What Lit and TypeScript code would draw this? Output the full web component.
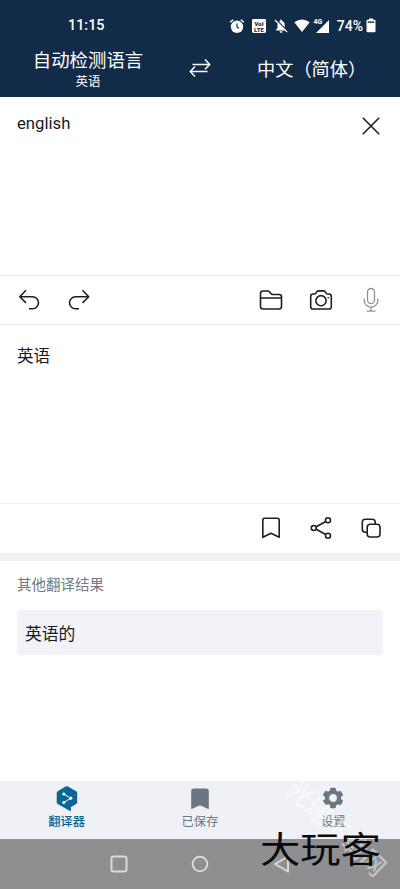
import { LitElement, html, css, svg } from "lit";
import { customElement } from "lit/decorators.js";

const icon = (w: number, h: number, body: unknown, cls = "") =>
  html`<svg class="ic ${cls}" width=${w} height=${h} viewBox="0 0 ${w} ${h}">${body}</svg>`;

const alarm = icon(16, 16, svg`<circle cx="8" cy="8.8" r="6.2" fill="#fff"/><path d="M1.2 4.3 4.2 1.7M14.8 4.3 11.8 1.7" stroke="#fff" stroke-width="1.5"/><path d="M8 5.4V9l2 1.5" stroke="#122b48" stroke-width="1.2" fill="none"/>`);
const volte = icon(14, 14, svg`<rect width="14" height="14" rx="1.4" fill="#fff"/><text x="7" y="6.8" class="vo">VoI</text><text x="7" y="12.8" class="vo">LTE</text>`);
const bell = icon(16, 16, svg`<path d="M3.2 12.500V11.500l1.300-1.200V7c0-2 1.100-3.500 2.700-3.900V2.300a.9.9 0 0 1 1.800 0v.8c1.600.4 2.700 1.900 2.700 3.900v3.300L13 11.500v1zM6.600 13.300h3A1.500 1.500 0 0 1 6.600 13.300z" fill="#fff"/><path d="M3 1.500 15 13.500" stroke="#122b48" stroke-width="1.300"/><path d="M2 2 14.200 14.200" stroke="#fff" stroke-width="1.200"/>`);
const wifi = icon(16, 14, svg`<path d="M.3 3.200Q8-2.400 15.700 3.200L8 13z" fill="#fff"/>`);
const signal = icon(16, 16, svg`<path d="M15 2v13H2z" fill="#fff"/><path d="M0 0h8.400v6.600H0z" fill="#122b48"/><text x="-.5" y="5.800" class="g4">4G</text>`);
const battery = icon(10, 15, svg`<path d="M3 .500h4v1.300h1.500q1 0 1 1v10.200q0 1.200-1 1.200h-7q-1 0-1-1.200V2.800q0-1 1-1H3z" fill="#fff"/><path d="M1.700 4.100h6.600" stroke="#122b48" stroke-width="1.400"/>`);
const swap = icon(22, 22, svg`<path d="M3.500 7.400H20.500M16 2.500l4.700 4.900L16 12.300M18.500 14.500H1.500M6 9.600l-4.700 4.900L6 19.400" class="lw"/>`);
const close = icon(20, 20, svg`<path d="m1.800 1.800 16.400 16.400M18.200 1.800 1.800 18.200" class="ln"/>`);
const undo = icon(24, 24, svg`<path d="M9 2.300 2.800 8.700l6.200 6.200M3 8.700h12.500a6 6 0 0 1 0 12h-3.500" class="ln"/>`);
const redo = icon(24, 24, svg`<path d="M15.500 2.300 21.700 8.700l-6.200 6.200M21.500 8.700H8.500a6 6 0 0 0 0 12h3.500" class="ln"/>`);
const folder = icon(24, 22, svg`<path d="M1.500 17.500v-13q0-2.500 2.500-2.500h4.700q1.300 0 2.100 1.100l1 1.400q.7 1 2 1h6.200q2.500 0 2.500 2.500v9.500q0 2.500-2.500 2.500H4q-2.500 0-2.500-2.500zM1.500 9h21" class="ln"/>`);
const camera = icon(24, 22, svg`<path d="M4 5h1.300q1 0 1.600-.9l.8-1.200q.7-1 1.900-1h4.800q1.200 0 1.900 1l.8 1.200q.6.900 1.600.9H20q2.300 0 2.300 2.300v10.400q0 2.300-2.300 2.300H4q-2.300 0-2.300-2.300V7.300Q1.700 5 4 5z" class="ln"/><circle cx="12" cy="11.700" r="5.100" class="ln"/><circle cx="19.200" cy="8.800" r=".8"/>`);
const mic = icon(18, 26, svg`<rect x="5.500" y="1.500" width="7" height="15" rx="3.500" class="lm"/><path d="M2.200 11.500v1.800a6.800 6.800 0 0 0 13.600 0v-1.800M9 20v4M4.500 24.200h9" class="lm"/>`);
const mark = icon(20, 24, svg`<path d="M1.800 21.300V4.200q0-2 2-2h12.400q2 0 2 2v17.100L10 17.200z" class="ln"/>`);
const share = icon(24, 24, svg`<path d="M7.200 10.800 16.800 5.500M7.200 13.200 16.800 18.500" class="ln"/><circle cx="4.800" cy="12" r="2.500" class="ln"/><circle cx="19" cy="4.300" r="2.500" class="ln"/><circle cx="19" cy="19.700" r="2.500" class="ln"/>`);
const copy = icon(22, 22, svg`<path d="M7.200 15.200H5.300q-3-.1-3-3V5.300q0-3 3-3h6.900q3 0 3 3v1.900" class="ln"/><rect x="7.200" y="7.200" width="12.800" height="12.800" rx="3" class="ln"/>`);
const logo = icon(22, 26, svg`<path d="M9.600.600q1.200-.7 2.400 0l8.200 4.600q1 .6 1 1.800v9.300q0 1.200-1 1.800L14.900 21v4.500L1.700 18.100q-1-.6-1-1.800V7q0-1.200 1-1.800z" fill="#0b6595"/><path d="m7.800 8.200 7 4-7 4.300" fill="none" stroke="#fff" stroke-width="1"/><circle cx="7.800" cy="8" r="1.500" fill="#fff"/><circle cx="14.800" cy="12.200" r="1.600" fill="#fff"/><circle cx="7.800" cy="16.500" r="1.500" fill="#fff"/>`);
const saved = icon(18, 22, svg`<path d="M.2 21.200V3Q.2.500 2.700.500h12.600q2.500 0 2.500 2.500v18.200L9 17.200z" fill="#6a7681"/>`);
const gear = icon(22, 22, svg`<circle cx="11" cy="10" r="6" fill="none" stroke="#6a7681" stroke-width="4.200"/>${[0, 60, 120, 180, 240, 300].map((a) => svg`<rect x="8.100" y="-.3" width="5.800" height="5" rx="1.200" fill="#6a7681" transform="rotate(${a} 11 10)"/>`)}`);
const square = icon(18, 18, svg`<rect x="1.500" y="1.500" width="15" height="15" rx="2" class="lg"/>`);
const round = icon(18, 18, svg`<circle cx="9" cy="9" r="7.300" class="lg"/>`);
const back = icon(18, 18, svg`<path d="M2 9 15 1.500v15z" class="lg"/>`);

@customElement("app-root")
export class AppRoot extends LitElement {
  static styles = css`
    :host { display: flex; flex-direction: column; position: relative; height: 889px; overflow: hidden; background: #fff; color: #17191d; font-family: Roboto, "Noto Sans CJK SC", sans-serif; }
    * { box-sizing: border-box; }
    svg { display: block; flex: none; overflow: visible; }
    .ln { fill: none; stroke: #1d2022; stroke-width: 1.600; stroke-linejoin: round; }
    .lw { fill: none; stroke: #fff; stroke-width: 1.500; }
    .lm { fill: none; stroke: #929292; stroke-width: 1.300; }
    .lg { fill: none; stroke: #d9d9d9; stroke-width: 2; stroke-linejoin: round; }
    .vo { font: 900 6px "Roboto", sans-serif; text-anchor: middle; fill: #122b48; }
    .g4 { font: 700 7px Roboto, sans-serif; fill: #fff; }
    .head { height: 97px; background: #122b48; color: #fff; flex: none; }
    .status { height: 50px; display: flex; align-items: center; padding: 1px 24px 0 68px; }
    .time { font-size: 14.400px; font-weight: 500; margin-right: auto; }
    .sicons { display: flex; align-items: center; }
    .pct { font-size: 14px; font-weight: 500; margin: 0 3px 0 7px; }
    .gap { width: 7px; }
    .gap5 { width: 5px; }
    .gap4 { width: 4px; }
    .langs { height: 47px; display: grid; grid-template-columns: 176px 48px 176px; }
    .from { display: flex; flex-direction: column; align-items: center; line-height: 22px; font-size: 18.400px; }
    .from small { font-size: 12.500px; line-height: 20px; }
    .mid { display: flex; justify-content: center; padding-top: 7px; }
    .to { font-size: 18.200px; line-height: 38px; padding: 1px 0 0 33px; white-space: nowrap; }
    .src { height: 178px; flex: none; display: flex; justify-content: space-between; padding: 17px 19px 0 17px; }
    .word { font-size: 16.700px; line-height: 20px; }
    .src svg { margin-top: 2px; }
    .bar { height: 50px; flex: none; display: flex; align-items: center; border-top: 1px solid #eeeeef; padding: 0 17px; }
    .bar.b { border-bottom: 1px solid #eeeeef; }
    .bar.low { padding-bottom: 2px; }
    .cell { width: 24px; display: flex; justify-content: center; }
    .cell + .cell { margin-left: 26px; }
    .push { margin-left: auto !important; }
    .out { height: 178px; flex: none; padding: 20px 17px; font-size: 16.600px; line-height: 24px; }
    .sep { height: 8px; background: #f0f1f6; flex: none; }
    .other { flex: 1; padding: 15px 17px; }
    .lab { font-size: 14.500px; line-height: 20px; color: #75797e; }
    .card { margin-top: 14px; height: 45px; border-radius: 4px; background: #f2f3f8; padding-left: 8px; font-size: 16.800px; line-height: 48px; }
    .tabs { height: 58px; flex: none; background: #f0f1f6; display: grid; grid-template-columns: repeat(3, 1fr); color: #6a7681; }
    .tab { display: flex; flex-direction: column; align-items: center; font-size: 12.300px; line-height: 17px; }
    .pic { height: 33px; display: flex; align-items: center; padding-top: 3px; }
    .on { color: #0b6595; font-weight: 500; }
    .nav { height: 50px; flex: none; background: #8f8f91; display: flex; justify-content: center; align-items: center; gap: 63.500px; }
    .wm { position: absolute; left: 271px; top: 814px; width: 130px; text-align: center; font-size: 25px; line-height: 30px; font-weight: 500; color: rgba(255,255,255,.45); transform: rotate(44deg); white-space: nowrap; }
    .brand { position: absolute; left: 260px; top: 826px; font-family: "Noto Sans CJK SC", sans-serif; font-size: 36px; line-height: 42px; font-weight: 400; color: #0b0b0b; transform: scaleX(1.120); transform-origin: left; white-space: nowrap; }
  `;
  render() {
    return html`
      <div class="head">
        <div class="status"><span class="time">11:15</span>
          <div class="sicons">${alarm}<i class="gap"></i>${volte}<i class="gap"></i>${bell}<i class="gap5"></i>${wifi}<i class="gap4"></i>${signal}<span class="pct">74%</span>${battery}</div>
        </div>
        <div class="langs"><div class="from">自动检测语言<small>英语</small></div><div class="mid">${swap}</div><div class="to">中文（简体）</div></div>
      </div>
      <div class="src"><span class="word">english</span>${close}</div>
      <div class="bar b"><div class="cell">${undo}</div><div class="cell">${redo}</div><div class="cell push">${folder}</div><div class="cell">${camera}</div><div class="cell">${mic}</div></div>
      <div class="out">英语</div>
      <div class="bar low"><div class="cell push">${mark}</div><div class="cell">${share}</div><div class="cell">${copy}</div></div>
      <div class="sep"></div>
      <div class="other"><div class="lab">其他翻译结果</div><div class="card">英语的</div></div>
      <div class="tabs">
        <div class="tab on"><div class="pic">${logo}</div>翻译器</div>
        <div class="tab"><div class="pic">${saved}</div>已保存</div>
        <div class="tab"><div class="pic">${gear}</div>设置</div>
      </div>
      <div class="nav">${square}${round}${back}</div>
      <div class="wm">光速下载网</div>
      <div class="brand">大玩客</div>`;
  }
}
